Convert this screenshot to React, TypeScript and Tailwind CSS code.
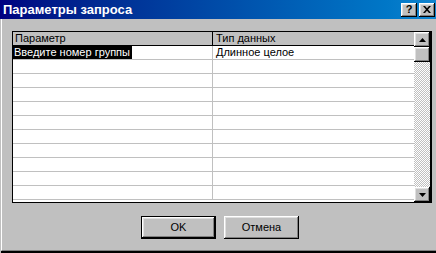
import React from "react";

const bevel =
  "shadow-[inset_-1px_-1px_#000,inset_1px_1px_#fff,inset_-2px_-2px_#808080,inset_2px_2px_#dfdfdf]";

function Arrow({ up }: { up?: boolean }) {
  return (
    <svg width="7" height="4" viewBox="0 0 7 4">
      <polygon points={up ? "3.5,0 7,4 0,4" : "0,0 7,0 3.5,4"} fill="#000" />
    </svg>
  );
}

const rows = Array.from({ length: 11 });

export default function App() {
  return (
    <div className="flex h-[253px] w-[436px] flex-col overflow-hidden bg-[#c0c0c0] font-['Liberation_Sans',Arial,sans-serif] text-[11px] leading-[13px] text-black">
      <div className="flex h-[19px] shrink-0 items-center justify-between bg-gradient-to-r from-[#000080] to-[#1084d0] pl-[3px] pr-[1px]">
        <span className="text-[13px] font-bold text-white">Параметры запроса</span>
        <div className="flex gap-[2px]">
          <div className={`flex h-[14px] w-[16px] items-center justify-center bg-[#c0c0c0] text-[11px] font-bold ${bevel}`}>?</div>
          <div className={`flex h-[14px] w-[16px] items-center justify-center bg-[#c0c0c0] ${bevel}`}>
            <svg width="8" height="7" viewBox="0 0 8 7">
              <path d="M0 0h2l2 2.3L6 0h2L5 3.5 8 7H6L4 4.7 2 7H0l3-3.5z" fill="#000" />
            </svg>
          </div>
        </div>
      </div>

      <div className="flex flex-1 flex-col pl-[1px]">
        <div className="flex flex-1 flex-col border-b border-l border-b-[#808080] border-l-white pl-[10px] pt-[12px]">
          <div className="flex h-[172px] w-[420px] border-b border-l border-r-2 border-t border-black bg-white">
            <div className="flex flex-1 flex-col overflow-hidden">
              <div className="flex h-[14px] shrink-0 border-b border-black bg-[#c0c0c0]">
                <div className="w-[200px] border-r border-black pl-[2px]">Параметр</div>
                <div className="flex-1 pl-[3px]">Тип данных</div>
              </div>
              {rows.map((_, i) => (
                <div key={i} className="flex h-[14px] shrink-0 border-b border-[#c0c0c0]">
                  <div className="w-[200px] border-r border-[#c0c0c0]">
                    {i === 0 && <span className="inline-block bg-black pl-[1px] pr-[2px] text-white">Введите номер группы</span>}
                  </div>
                  <div className="flex-1 pl-[3px]">{i === 0 ? "Длинное целое" : ""}</div>
                </div>
              ))}
            </div>
            <div className="flex w-[16px] flex-col bg-[repeating-conic-gradient(#c0c0c0_0_25%,#fff_0_50%)] bg-[length:2px_2px]">
              <div className={`flex h-[15px] items-center justify-center bg-[#c0c0c0] ${bevel}`}>
                <Arrow up />
              </div>
              <div className={`h-[15px] bg-[#c0c0c0] ${bevel}`} />
              <div className="flex-1" />
              <div className={`flex h-[15px] items-center justify-center bg-[#c0c0c0] ${bevel}`}>
                <Arrow />
              </div>
            </div>
          </div>

          <div className="mt-[13px] flex gap-[8px] pl-[129px]">
            <div className="border border-black">
              <div className={`flex h-[21px] w-[73px] items-center justify-center ${bevel}`}>OK</div>
            </div>
            <div className={`flex h-[23px] w-[75px] items-center justify-center ${bevel}`}>Отмена</div>
          </div>
        </div>
        <div className="h-[2px] bg-black" />
      </div>
    </div>
  );
}
